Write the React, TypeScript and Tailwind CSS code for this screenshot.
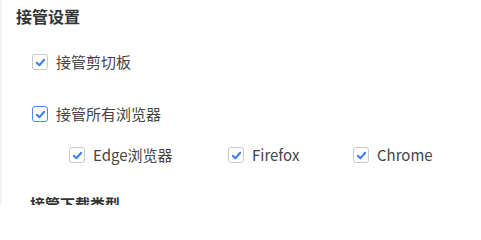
import type { ReactNode } from "react";

function Box({ focused = false }: { focused?: boolean }) {
  return (
    <span
      className={`flex h-4 w-4 shrink-0 items-center justify-center rounded-[3px] border bg-white ${
        focused ? "border-[#4a8af4]" : "border-[#c9c9c9]"
      }`}
    >
      <svg viewBox="0 0 12 12" className="h-[11px] w-[11px]">
        <path d="M2 6.3 L4.8 9 L10 3" fill="none" stroke="#3d7ff0" strokeWidth="2.2" strokeLinecap="round" strokeLinejoin="round" />
      </svg>
    </span>
  );
}

function Check({ children, focused }: { children: ReactNode; focused?: boolean }) {
  return (
    <label className="flex items-center gap-[8px] text-[15px] leading-[20px] text-[#444]">
      <Box focused={focused} />
      <span>{children}</span>
    </label>
  );
}

export default function App() {
  return (
    <div
      className="h-[205px] w-[481px] overflow-hidden border-l-2 border-[#f3f3f3] bg-white"
      style={{ fontFamily: '"Noto Sans CJK SC", "Noto Sans", sans-serif' }}
    >
      <div className="pl-[14px] pt-[3px] text-[16px] font-bold leading-[26px] text-[#333]">接管设置</div>
      <div className="mt-[23px] pl-[30px]">
        <Check>接管剪切板</Check>
      </div>
      <div className="mt-[32px] pl-[30px]">
        <Check focused>接管所有浏览器</Check>
      </div>
      <div className="mt-[21px] flex pl-[67px]">
        <div className="w-[159px]">
          <Check>Edge浏览器</Check>
        </div>
        <div className="w-[125px]">
          <Check>Firefox</Check>
        </div>
        <Check>Chrome</Check>
      </div>
      <div className="mt-[29px] pl-[28px] text-[15px] font-bold leading-[20px] text-[#333]">接管下载类型</div>
    </div>
  );
}
